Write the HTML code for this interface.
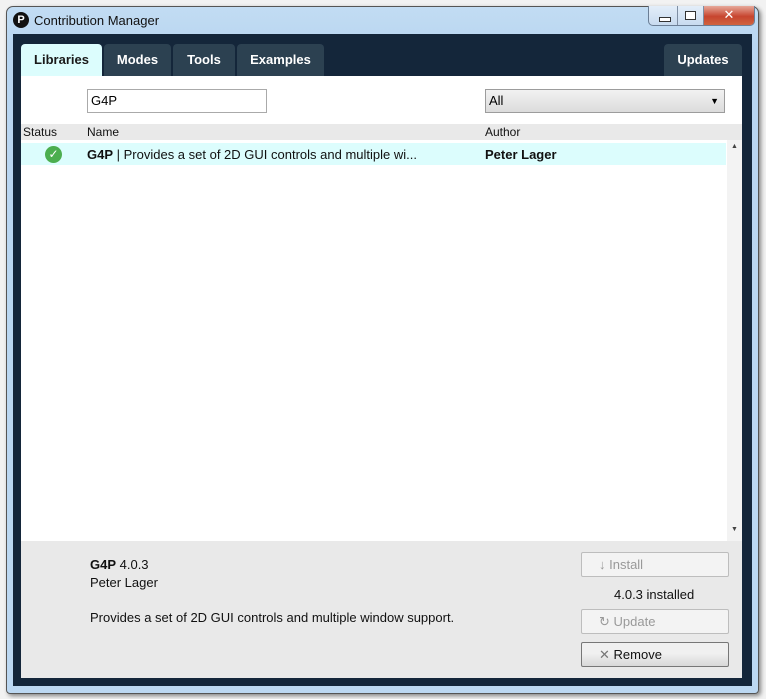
<!DOCTYPE html>
<html><head><style>
body{margin:0;width:766px;height:699px;background:#f2f2f2;position:relative;overflow:hidden;font-family:"Liberation Sans","DejaVu Sans",sans-serif;}
.abs{position:absolute;}
.frame{left:6px;top:6px;width:751px;height:686px;background:linear-gradient(#c2dcf3,#b9d6f1 40px,#bcd8f2);border:1px solid #555;border-radius:7px 7px 4px 4px;box-shadow:2px 2px 4px rgba(0,0,0,.45);}
.dark{left:13px;top:34px;width:739px;height:652px;background:#14263a;}
.tab{top:44px;height:32px;background:#2c4151;color:#fff;font-size:13px;font-weight:bold;line-height:31px;text-align:center;border-radius:4px 4px 0 0;}
.txt{font-size:12px;color:#111;white-space:nowrap;}
.btn{left:581px;width:146px;height:23px;border:1px solid #bdbdbd;border-radius:2px;background:#f3f3f3;color:#999;font-size:13px;line-height:23px;}
</style></head><body>
<div class="abs frame"></div>
<div class="abs" style="left:13px;top:12px;width:16px;height:16px;border-radius:50%;background:#111;color:#fff;font-size:11px;font-weight:bold;text-align:center;line-height:16px;">P</div>
<div class="abs txt" style="left:34px;top:13px;font-size:13px;">Contribution Manager</div>
<div class="abs" style="left:648px;top:6px;width:105px;height:19px;border:1px solid #6b7e95;border-top:none;border-radius:0 0 5px 5px;background:linear-gradient(#e3eef9,#c8dbef);overflow:hidden;">
 <div class="abs" style="left:28px;top:0;width:1px;height:19px;background:#7e8ea3"></div>
 <div class="abs" style="left:54px;top:0;width:1px;height:19px;background:#7e8ea3"></div>
 <div class="abs" style="left:10px;top:11px;width:10px;height:3px;border:1px solid #333;background:#fff"></div>
 <div class="abs" style="left:36px;top:5px;width:9px;height:7px;border:1px solid #333;background:#fff"></div>
 <div class="abs" style="left:55px;top:0;width:50px;height:19px;background:linear-gradient(#e6a99a,#c7452f 55%,#d0643f);color:#fff;font-weight:bold;font-size:13px;text-align:center;line-height:18px;">✕</div>
</div>
<div class="abs dark"></div>
<div class="abs tab" style="left:21px;width:81px;background:#dcfdfd;color:#1a1a1a;">Libraries</div>
<div class="abs tab" style="left:104px;width:67px;">Modes</div>
<div class="abs tab" style="left:173px;width:62px;">Tools</div>
<div class="abs tab" style="left:237px;width:87px;">Examples</div>
<div class="abs tab" style="left:664px;width:78px;">Updates</div>
<div class="abs" style="left:21px;top:76px;width:721px;height:465px;background:#fff;"></div>
<div class="abs" style="left:87px;top:89px;width:178px;height:22px;border:1px solid #aaa;background:#fff;font-size:13px;line-height:22px;padding-left:3px;box-sizing:border-box;width:180px;height:24px;">G4P</div>
<div class="abs" style="left:485px;top:89px;width:240px;height:24px;box-sizing:border-box;border:1px solid #9c9c9c;background:linear-gradient(#f2f2f2,#dcdcdc);font-size:13px;line-height:22px;padding-left:3px;">All<span class="abs" style="right:5px;top:0;font-size:9px;">▼</span></div>
<div class="abs" style="left:21px;top:124px;width:721px;height:16px;background:#e9e9e9;"></div>
<div class="abs txt" style="left:23px;top:125px;">Status</div>
<div class="abs txt" style="left:87px;top:125px;">Name</div>
<div class="abs txt" style="left:485px;top:125px;">Author</div>
<div class="abs" style="left:727px;top:140px;width:15px;height:401px;background:#f3f3f3;"></div>
<div class="abs" style="left:731px;top:143px;font-size:7px;color:#444;">▲</div>
<div class="abs" style="left:731px;top:526px;font-size:7px;color:#444;">▼</div>
<div class="abs" style="left:21px;top:143px;width:705px;height:22px;background:#dcfdfd;"></div>
<div class="abs" style="left:45px;top:146px;width:17px;height:17px;border-radius:50%;background:#4cae4f;color:#fff;font-size:12px;font-weight:bold;text-align:center;line-height:17px;">✓</div>
<div class="abs txt" style="left:87px;top:147px;font-size:13px;"><b>G4P</b> | Provides a set of 2D GUI controls and multiple wi...</div>
<div class="abs txt" style="left:485px;top:147px;font-size:13px;font-weight:bold;">Peter Lager</div>
<div class="abs" style="left:21px;top:541px;width:721px;height:137px;background:#e9e9e9;"></div>
<div class="abs txt" style="left:90px;top:557px;font-size:13px;"><b>G4P</b> 4.0.3</div>
<div class="abs txt" style="left:90px;top:575px;font-size:13px;">Peter Lager</div>
<div class="abs txt" style="left:90px;top:610px;font-size:13px;">Provides a set of 2D GUI controls and multiple window support.</div>
<div class="abs btn" style="top:552px;"><span style="margin-left:17px">↓ Install</span></div>
<div class="abs txt" style="left:614px;top:587px;font-size:13px;">4.0.3 installed</div>
<div class="abs btn" style="top:609px;"><span style="margin-left:17px">↻ Update</span></div>
<div class="abs btn" style="top:642px;border-color:#777;background:linear-gradient(#f0f0f0,#f0f0f0 45%,#d8d8d8);color:#111;"><span style="margin-left:17px"><span style="color:#777">✕</span> Remove</span></div>
</body></html>
